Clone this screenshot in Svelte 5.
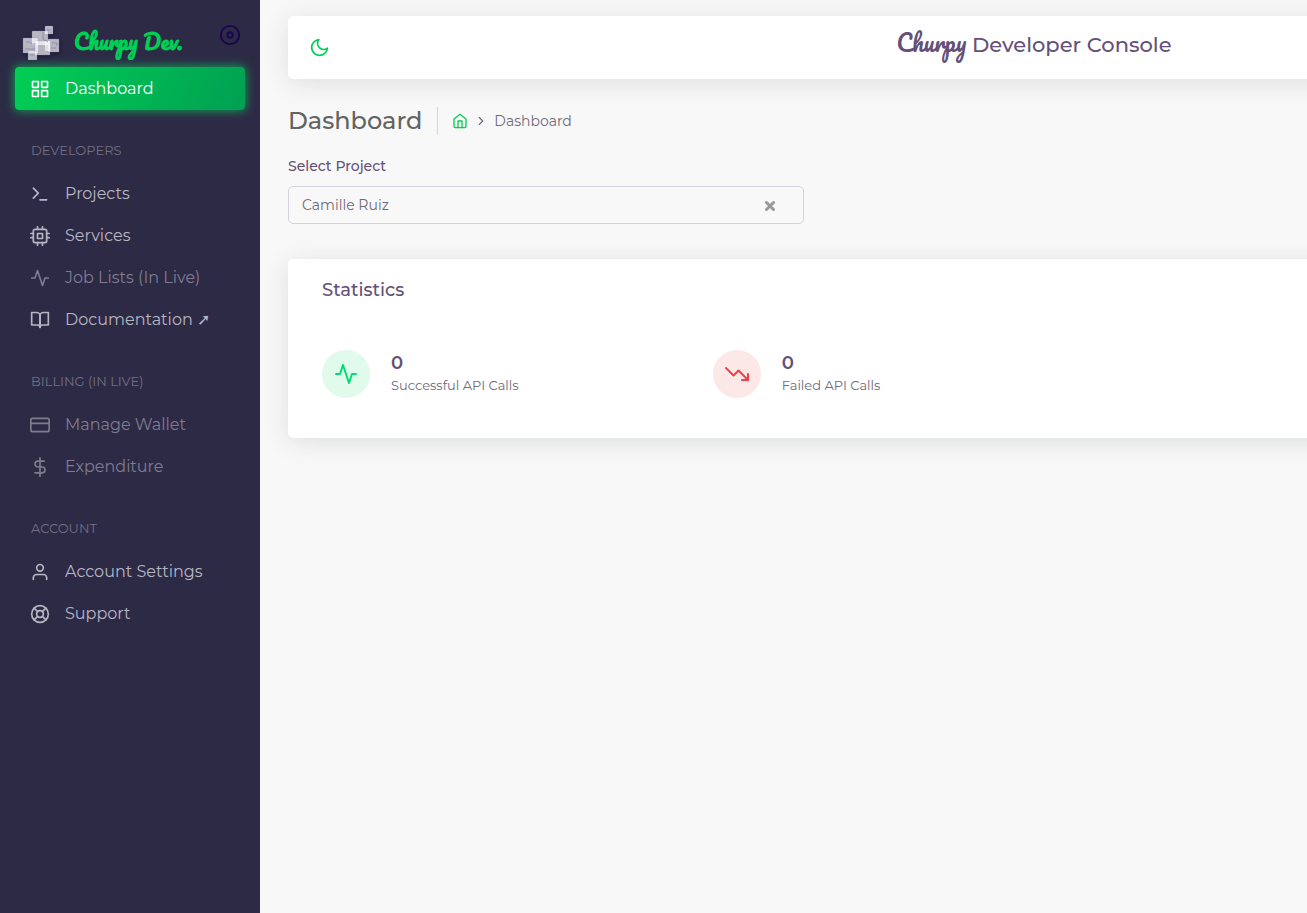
<script lang="ts">
  const sections = [
    {
      title: 'DEVELOPERS',
      items: [
        { label: 'Projects', icon: 'terminal' },
        { label: 'Services', icon: 'cpu' },
        { label: 'Job Lists (In Live)', icon: 'activity', disabled: true },
        { label: 'Documentation ➚', icon: 'book' },
      ],
    },
    {
      title: 'BILLING (IN LIVE)',
      items: [
        { label: 'Manage Wallet', icon: 'card', disabled: true },
        { label: 'Expenditure', icon: 'dollar', disabled: true },
      ],
    },
    {
      title: 'ACCOUNT',
      items: [
        { label: 'Account Settings', icon: 'user' },
        { label: 'Support', icon: 'buoy' },
      ],
    },
  ];

  const stats = [
    { value: 0, label: 'Successful API Calls', icon: 'activity', tone: 'success' },
    { value: 0, label: 'Failed API Calls', icon: 'trend', tone: 'danger' },
  ];

  let project = $state('Camille Ruiz');
</script>

{#snippet icon(name: string, size: number)}
  <svg width={size} height={size} viewBox="0 0 24 24" fill="none" stroke="currentColor" stroke-width="2" stroke-linecap="round" stroke-linejoin="round" aria-hidden="true">
    {#if name === 'grid'}
      <rect x="3" y="3" width="7" height="7" /><rect x="14" y="3" width="7" height="7" /><rect x="14" y="14" width="7" height="7" /><rect x="3" y="14" width="7" height="7" />
    {:else if name === 'terminal'}
      <polyline points="4 17 10 11 4 5" /><line x1="12" y1="19" x2="20" y2="19" />
    {:else if name === 'cpu'}
      <rect x="4" y="4" width="16" height="16" rx="2" /><rect x="9" y="9" width="6" height="6" />
      <path d="M9 1v3M15 1v3M9 20v3M15 20v3M20 9h3M20 14h3M1 9h3M1 14h3" />
    {:else if name === 'activity'}
      <polyline points="22 12 18 12 15 21 9 3 6 12 2 12" />
    {:else if name === 'book'}
      <path d="M2 3h6a4 4 0 0 1 4 4v14a3 3 0 0 0-3-3H2z" /><path d="M22 3h-6a4 4 0 0 0-4 4v14a3 3 0 0 1 3-3h7z" />
    {:else if name === 'card'}
      <rect x="1" y="4" width="22" height="16" rx="2" /><line x1="1" y1="10" x2="23" y2="10" />
    {:else if name === 'dollar'}
      <line x1="12" y1="1" x2="12" y2="23" /><path d="M17 5H9.5a3.5 3.5 0 0 0 0 7h5a3.5 3.5 0 0 1 0 7H6" />
    {:else if name === 'user'}
      <path d="M20 21v-2a4 4 0 0 0-4-4H8a4 4 0 0 0-4 4v2" /><circle cx="12" cy="7" r="4" />
    {:else if name === 'buoy'}
      <circle cx="12" cy="12" r="10" /><circle cx="12" cy="12" r="4" />
      <path d="M4.93 4.93l4.24 4.24M14.83 14.83l4.24 4.24M14.83 9.17l4.24-4.24M4.93 19.07l4.24-4.24" />
    {:else if name === 'disc'}
      <circle cx="12" cy="12" r="10" /><circle cx="12" cy="12" r="3" />
    {:else if name === 'moon'}
      <path d="M21 12.79A9 9 0 1 1 11.21 3 7 7 0 0 0 21 12.79z" />
    {:else if name === 'home'}
      <path d="M3 9l9-7 9 7v11a2 2 0 0 1-2 2H5a2 2 0 0 1-2-2z" /><polyline points="9 22 9 12 15 12 15 22" />
    {:else if name === 'chevron'}
      <polyline points="9 18 15 12 9 6" />
    {:else if name === 'trend'}
      <polyline points="23 18 13.5 8.5 8.5 13.5 1 6" /><polyline points="17 18 23 18 23 12" />
    {/if}
  </svg>
{/snippet}

<div class="app">
  <aside class="sidebar">
    <div class="brand">
      <a class="logo" href="#home">
        <svg class="mark" width="40" height="36" viewBox="0 0 40 36" aria-hidden="true">
          <g fill="#fff" fill-opacity=".68" stroke="#8880bd" stroke-opacity=".35" stroke-width=".7">
            <rect x="24" y="2" width="8" height="8" rx=".5" />
            <rect x="11" y="7" width="16" height="14" rx=".5" />
            <rect x="2" y="14" width="15" height="15" rx=".5" />
            <rect x="14" y="17" width="15" height="14" rx=".5" />
            <rect x="27" y="15" width="11" height="13" rx=".5" />
            <rect x="7" y="27" width="9" height="9" rx=".5" />
          </g>
          <path d="M14 17h3v4h-3zM24 17h5v10h-5z" fill="#fff" fill-opacity=".6" />
          <path d="M5 18h4l2 2h4M4 25h10M22 8v7l5 3M26 6h4M30 24h5M31 19h5v3M9 31h4" fill="none" stroke="#7167aa" stroke-opacity=".5" />
        </svg>
        <span class="script">Churpy Dev.</span>
      </a>
      <button class="pin" aria-label="Toggle menu">{@render icon('disc', 22)}</button>
    </div>
    <nav>
      <a class="item active" href="#dashboard">{@render icon('grid', 20)}<span>Dashboard</span></a>
      {#each sections as section}
        <h2>{section.title}</h2>
        {#each section.items as item}
          <a class="item" class:disabled={item.disabled} href="#menu">{@render icon(item.icon, 20)}<span>{item.label}</span></a>
        {/each}
      {/each}
    </nav>
  </aside>

  <main>
    <header class="topbar">
      <button class="theme" aria-label="Toggle theme">{@render icon('moon', 21)}</button>
      <div class="title"><span class="script">Churpy</span> Developer Console</div>
    </header>

    <div class="heading">
      <h1>Dashboard</h1>
      <nav class="crumbs" aria-label="Breadcrumb">
        <a href="#home" aria-label="Home">{@render icon('home', 16)}</a>
        {@render icon('chevron', 14)}
        <span>Dashboard</span>
      </nav>
    </div>

    <div class="field">
      <label for="project">Select Project</label>
      <div class="combo">
        <input id="project" type="text" bind:value={project} />
        <button aria-label="Clear selection" onclick={() => (project = '')}>
          <svg width="12" height="12" viewBox="0 0 12 12" stroke="#999" stroke-width="3" stroke-linecap="round" aria-hidden="true"><path d="M2.5 3.5l7 7M9.5 3.5l-7 7" /></svg>
        </button>
      </div>
    </div>

    <section class="card">
      <h3>Statistics</h3>
      <div class="stats">
        {#each stats as stat}
          <div class="stat">
            <div class="avatar {stat.tone}">{@render icon(stat.icon, 24)}</div>
            <div class="figures">
              <strong>{stat.value}</strong>
              <p>{stat.label}</p>
            </div>
          </div>
        {/each}
      </div>
    </section>
  </main>
</div>

<style>
  :global(body) {
    background: #f8f8f8;
    overflow-x: hidden;
  }
  .app {
    display: flex;
    min-width: 1920px;
    min-height: 100vh;
    font-family: Montserrat, Inter, sans-serif;
    font-size: 14px;
    color: #6e6b7b;
  }
  .app * {
    box-sizing: border-box;
  }
  svg {
    display: block;
    flex: none;
  }
  a {
    color: inherit;
    text-decoration: none;
  }
  button {
    padding: 0;
    border: 0;
    background: none;
    cursor: pointer;
  }
  h1, h2, h3, p {
    margin: 0;
    font-weight: 400;
  }
  .script {
    font-family: Pacifico, Lato, cursive;
    font-weight: 400;
  }

  .sidebar {
    width: 260px;
    flex: none;
    background: #2d2a46;
    color: #b8b6c2;
  }
  .brand {
    display: flex;
    justify-content: space-between;
    height: 67px;
    padding: 24px 19px 0 21px;
  }
  .logo {
    display: flex;
    gap: 13px;
    height: 36px;
    overflow: hidden;
    color: #00cf55;
    font-size: 21px;
    line-height: 36px;
    white-space: nowrap;
  }
  .logo .script {
    font-weight: 700;
  }
  .mark {
    filter: drop-shadow(1px 2px 2px #1b1832);
  }
  .pin {
    height: 22px;
    color: #1d0350;
  }
  .item {
    display: flex;
    align-items: center;
    gap: 15px;
    height: 42px;
    padding: 0 30px;
    font-size: 16px;
    line-height: 20px;
    white-space: nowrap;
  }
  .item.disabled {
    color: #7f7c8f;
  }
  .item.active {
    height: 43px;
    margin: 0 15px;
    padding: 0 15px;
    border-radius: 4px;
    background: linear-gradient(118deg, #00cf55, #00a052);
    box-shadow: 0 0 10px 1px rgba(0, 207, 85, 0.7);
    color: #fff;
  }
  h2 {
    padding: 31px 31px 14px;
    font-size: 13px;
    line-height: 18px;
    color: #716e82;
  }

  main {
    flex: 1;
    min-width: 0;
    padding: 16px 28px;
  }
  .topbar, .card {
    border-radius: 5px;
    background: #fff;
    box-shadow: 0 4px 24px 0 rgba(34, 41, 47, 0.12);
  }
  .topbar {
    display: flex;
    align-items: center;
    height: 63px;
    padding: 0 154px 0 21px;
  }
  .theme {
    color: #00cf55;
  }
  .title {
    flex: 1;
    padding-bottom: 8px;
    text-align: center;
    font-size: 21px;
    line-height: 36px;
    color: #655078;
    font-weight: 500;
  }
  .title .script {
    font-size: 23px;
  }

  .heading {
    display: flex;
    align-items: center;
    margin-top: 28px;
  }
  h1 {
    padding-right: 15px;
    border-right: 1px solid #d6d5da;
    font-size: 24px;
    line-height: 28px;
    font-weight: 500;
    color: #636363;
  }
  .crumbs {
    display: flex;
    align-items: center;
    gap: 6px;
    padding-left: 14px;
    line-height: 20px;
  }
  .crumbs a {
    color: #00cf55;
  }
  .field {
    width: calc((100% + 28px) / 3 - 28px);
    margin-top: 21px;
  }
  label {
    display: block;
    margin-bottom: 10px;
    font-size: 14px;
    line-height: 20px;
    font-weight: 500;
    color: #655078;
  }
  .combo {
    display: flex;
    align-items: center;
    height: 38px;
    padding: 0 27px 0 13px;
    border: 1px solid #d5d2df;
    border-radius: 5px;
  }
  .combo input {
    flex: 1;
    min-width: 0;
    padding: 0;
    border: 0;
    outline: 0;
    background: none;
    color: inherit;
    font: inherit;
  }
  .card {
    margin-top: 35px;
    padding: 18px 7px 40px 34px;
  }
  h3 {
    font-size: 18px;
    line-height: 26px;
    font-weight: 500;
    color: #655078;
  }
  .stats {
    display: grid;
    grid-template-columns: repeat(4, 1fr);
    margin-top: 47px;
  }
  .stat {
    display: flex;
    align-items: center;
    gap: 21px;
  }
  .avatar {
    display: grid;
    place-items: center;
    width: 48px;
    height: 48px;
    border-radius: 50%;
  }
  .success {
    background: #e0fbeb;
    color: #00dc72;
  }
  .danger {
    background: #fde8e8;
    color: #f0414a;
  }
  .figures {
    padding-bottom: 4px;
  }
  strong {
    display: block;
    font-size: 18px;
    line-height: 26px;
    font-weight: 600;
    color: #655078;
  }
  p {
    font-size: 13px;
    line-height: 18px;
  }
</style>
